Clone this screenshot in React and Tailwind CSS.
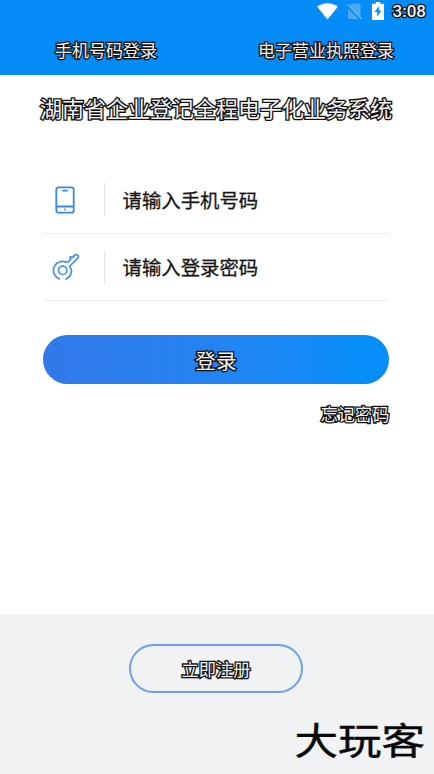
import React from "react";

const outline = "[-webkit-text-stroke:2.7px_#101010] [paint-order:stroke_fill] [stroke-linejoin:round] text-[#f0f0f0] whitespace-nowrap";

function StatusBar() {
  return (
    <div className="flex h-[22px] items-center justify-end pr-[8px]">
      <svg className="mr-[9px] h-[17px] w-[21px]" viewBox="0 0 21 17" fill="#fff">
        <path d="M0.2 3.8C6-.9 15-.9 20.8 3.8L10.5 16.5Z" />
      </svg>
      <svg className="mr-[10px] h-[17px] w-[15px]" viewBox="0 0 15 17">
        <path d="M5 0.5H12.5Q13.5.5 13.5 1.5V16H2Q1 16 1 15V4.5Z" fill="#4ba9f5" />
        <path d="M0 3L14.5 17" stroke="#078cf5" strokeWidth="2.6" />
        <path d="M0.2 1.2L14.8 16" stroke="#6cbaf8" strokeWidth="1.2" />
      </svg>
      <svg className="mr-[9px] h-[18px] w-[12px]" viewBox="0 0 12 18">
        <path d="M3.8 0H8.2V1.8H12V18H0V1.8H3.8Z" fill="#fff" />
        <path d="M7.2 4L2.5 10H5.4L4.8 15L9.6 8.6H6.7Z" fill="#078cf5" />
      </svg>
      <span className={`font-[Roboto,sans-serif] text-[17px] leading-5 font-medium ${outline}`}>3:08</span>
    </div>
  );
}

function PhoneIcon() {
  return (
    <svg className="h-7 w-5" viewBox="0 0 20 28" fill="none" stroke="#3986e9" strokeWidth="1.8" strokeLinecap="round">
      <rect x="1.3" y="1.3" width="17.4" height="25.4" rx="2.3" />
      <path d="M2 20.5H18M8 4.7H12" />
      <path d="M10 23.5H10.1" />
    </svg>
  );
}

function KeyIcon() {
  return (
    <svg className="ml-[2px] h-7 w-7" viewBox="0 0 28 28" fill="none" stroke="#4790eb" strokeWidth="1.7" strokeLinecap="round" strokeLinejoin="round">
      <path d="M7.2 26C2.8 24 .7 19.5 1.7 15.2C3.2 9.5 9.5 6.8 15.5 9.5L18.8 6.4L18 3.8L20.8 4.4L22.8 1.9Q24.3.9 26 2.5Q27 4 25.6 5.4L17.5 13.5C21 17.5 19.6 23.5 14 26" />
      <circle cx="10.7" cy="17.3" r="4.2" />
    </svg>
  );
}

function Field({ icon, label }) {
  return (
    <div className="flex h-[67.5px] items-center border-b border-[#ededed]">
      <div className="flex w-[45px] justify-center">{icon}</div>
      <div className="ml-[16px] h-[33px] w-px bg-[#e5e5e5]" />
      <span className="ml-[18px] text-[19.4px] leading-7 whitespace-nowrap text-[#161616] [-webkit-text-stroke:0.3px_#161616]">{label}</span>
    </div>
  );
}

export default function App() {
  return (
    <div className="flex h-[774px] w-[434px] flex-col overflow-hidden bg-white font-['Noto_Sans_CJK_SC',sans-serif]">
      <header className="h-[74.5px] shrink-0 bg-[#058cf6]">
        <StatusBar />
        <nav className="flex justify-between pt-[16px] pr-[40px] pl-[55px] text-[17px] leading-6">
          <span className={outline}>手机号码登录</span>
          <span className={outline}>电子营业执照登录</span>
        </nav>
      </header>

      <main className="flex-1 pr-[44.6px] pl-[42.5px]">
        <h1 className={`-mx-[2.5px] pt-[16.4px] text-[22px] leading-8 ${outline}`}>湖南省企业登记全程电子化业务系统</h1>
        <div className="pt-[43.6px]">
          <Field icon={<PhoneIcon />} label="请输入手机号码" />
          <Field icon={<KeyIcon />} label="请输入登录密码" />
        </div>
        <button className="mt-[34px] flex h-[49px] w-full items-center justify-center rounded-full bg-linear-to-r from-[#3278e9] to-[#058df8] to-90%">
          <span className={`text-[20.6px] leading-7 ${outline}`}>登录</span>
        </button>
        <div className="flex justify-end pt-[17.6px]">
          <span className={`text-[17.2px] leading-6 ${outline}`}>忘记密码</span>
        </div>
      </main>

      <footer className="flex h-[160px] shrink-0 flex-col items-center bg-[#f0f2f4] pt-[30px]">
        <button className="mr-[2px] flex h-[49px] w-[174px] shrink-0 items-center justify-center rounded-full border-2 border-[#6a9fed]">
          <span className={`text-[17.2px] leading-6 ${outline}`}>立即注册</span>
        </button>
        <div className="mt-[24px] mr-[9px] origin-center scale-y-[0.86] self-end text-[43.5px] leading-[46px] font-normal whitespace-nowrap text-[#080808] [-webkit-text-stroke:0.5px_#080808] [stroke-linejoin:round]">大玩客</div>
      </footer>
    </div>
  );
}
